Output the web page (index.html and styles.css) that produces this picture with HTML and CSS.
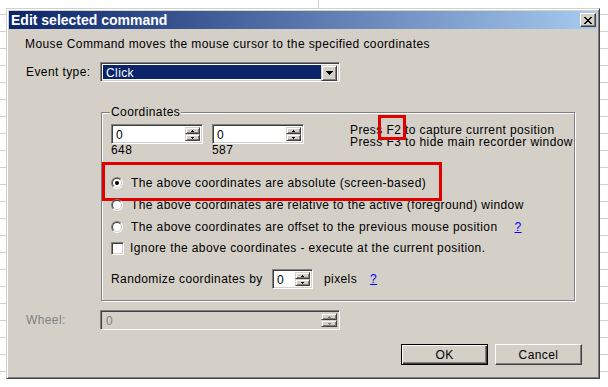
FILE: index.html
```html
<!DOCTYPE html>
<html>
<head>
<meta charset="utf-8">
<title>Edit selected command</title>
<link rel="stylesheet" href="styles.css">
</head>
<body>
<div class="dialog">
  <div class="titlebar">
    <span class="title">Edit selected command</span>
    <span class="close"><svg width="8" height="7" viewBox="0 0 8 7" shape-rendering="crispEdges"><path d="M0 0h2v1h-2z M6 0h2v1h-2z M1 1h2v1h-2z M5 1h2v1h-2z M2 2h4v1h-4z M3 3h2v1h-2z M2 4h4v1h-4z M1 5h2v1h-2z M5 5h2v1h-2z M0 6h2v1h-2z M6 6h2v1h-2z"/></svg></span>
  </div>
  <div class="content">
    <p class="desc">Mouse Command moves the mouse cursor to the specified coordinates</p>

    <div class="field-row event-row">
      <span class="field-label">Event type:</span>
      <div class="combo sunken">
        <span class="combo-value">Click</span>
        <span class="raised drop"><svg width="7" height="4" viewBox="0 0 7 4" shape-rendering="crispEdges"><path d="M0 0h7v1h-1v1h-1v1h-1v1h-1v-1h-1v-1h-1v-1h-1z"/></svg></span>
      </div>
    </div>

    <div class="group">
      <span class="legend">Coordinates</span>
      <div class="coords-row">
        <div class="coord">
          <div class="spin sunken">
            <span class="spin-value">0</span>
            <span class="spin-btns">
              <span class="raised spin-btn"><svg width="3" height="2" viewBox="0 0 3 2" shape-rendering="crispEdges"><path d="M1 0h1v1h1v1H0v-1h1z"/></svg></span>
              <span class="raised spin-btn"><svg width="3" height="2" viewBox="0 0 3 2" shape-rendering="crispEdges"><path d="M0 0h3v1h-1v1h-1v-1H0z"/></svg></span>
            </span>
          </div>
          <span class="coord-hint">648</span>
        </div>
        <div class="coord">
          <div class="spin sunken">
            <span class="spin-value">0</span>
            <span class="spin-btns">
              <span class="raised spin-btn"><svg width="3" height="2" viewBox="0 0 3 2" shape-rendering="crispEdges"><path d="M1 0h1v1h1v1H0v-1h1z"/></svg></span>
              <span class="raised spin-btn"><svg width="3" height="2" viewBox="0 0 3 2" shape-rendering="crispEdges"><path d="M0 0h3v1h-1v1h-1v-1H0z"/></svg></span>
            </span>
          </div>
          <span class="coord-hint">587</span>
        </div>
        <div class="press">
          <div>Press <span class="mark">F2</span> to capture current position</div>
          <div>Press F3 to hide main recorder window</div>
        </div>
      </div>

      <div class="options">
        <div class="option highlight"><span class="radio checked"></span><span class="opt-text">The above coordinates are absolute (screen-based)</span></div>
        <div class="option"><span class="radio"></span><span class="opt-text">The above coordinates are relative to the active (foreground) window</span></div>
        <div class="option"><span class="radio"></span><span class="opt-text">The above coordinates are offset to the previous mouse position</span><a class="help">?</a></div>
        <div class="option check-row"><span class="checkbox"></span><span class="chk-text">Ignore the above coordinates - execute at the current position.</span></div>
      </div>

      <div class="random-row">
        <span class="random-label">Randomize coordinates by</span>
        <div class="spin sunken small">
          <span class="spin-value">0</span>
          <span class="spin-btns">
            <span class="raised spin-btn"><svg width="3" height="2" viewBox="0 0 3 2" shape-rendering="crispEdges"><path d="M1 0h1v1h1v1H0v-1h1z"/></svg></span>
            <span class="raised spin-btn"><svg width="3" height="2" viewBox="0 0 3 2" shape-rendering="crispEdges"><path d="M0 0h3v1h-1v1h-1v-1H0z"/></svg></span>
          </span>
        </div>
        <span class="pixels">pixels</span>
        <a class="help">?</a>
      </div>
    </div>

    <div class="field-row wheel-row">
      <span class="field-label disabled">Wheel:</span>
      <div class="spin sunken wide disabled-box">
        <span class="spin-value">0</span>
        <span class="spin-btns">
          <span class="raised spin-btn"><svg width="3" height="2" viewBox="0 0 3 2" shape-rendering="crispEdges"><path d="M1 0h1v1h1v1H0v-1h1z"/></svg></span>
          <span class="raised spin-btn"><svg width="3" height="2" viewBox="0 0 3 2" shape-rendering="crispEdges"><path d="M0 0h3v1h-1v1h-1v-1H0z"/></svg></span>
        </span>
      </div>
    </div>

    <div class="buttons">
      <button class="btn default">OK</button>
      <button class="btn">Cancel</button>
    </div>
  </div>
</div>
</body>
</html>
```
FILE: styles.css
```css
* { box-sizing: border-box; }

html, body {
  margin: 0;
  padding: 0;
}

body {
  width: 608px;
  height: 387px;
  overflow: hidden;
  padding: 8px 0 0 6px;
  background-color: #fff;
  background-image:
    linear-gradient(to right, transparent 318px, #d0d0d0 318px, #d0d0d0 319px, transparent 319px),
    repeating-linear-gradient(to bottom, transparent 0, transparent 14px, #d0d0d0 14px, #d0d0d0 15px, transparent 15px, transparent 17px);
  background-size: 100% 8px, 100% 100%;
  background-repeat: no-repeat, repeat;
  font-family: "Liberation Sans", Arial, sans-serif;
  font-size: 12px;
  letter-spacing: 0.4px;
  color: #000;
}

.dialog {
  width: 594px;
  height: 371px;
  background: #d4d0c8;
  border: 1px solid;
  border-color: #d4d0c8 #404040 #404040 #d4d0c8;
  box-shadow: inset 1px 1px #fff, inset -1px -1px #808080;
  padding: 2px;
  display: flex;
  flex-direction: column;
}

.titlebar {
  height: 18px;
  flex: none;
  background: linear-gradient(to right, #0a246a, #a6caf0);
  display: flex;
  align-items: center;
  justify-content: space-between;
  padding: 0 1px 0 2px;
}

.title {
  color: #fff;
  font-weight: bold;
  font-size: 14px;
  line-height: 18px;
  letter-spacing: 0;
  white-space: nowrap;
}

.close {
  width: 16px;
  height: 14px;
  background: #d4d0c8;
  border: 1px solid;
  border-color: #fff #404040 #404040 #fff;
  box-shadow: inset -1px -1px #808080;
  display: flex;
  align-items: center;
  justify-content: center;
}

.close svg { display: block; }

.content {
  display: flex;
  flex-direction: column;
  align-items: flex-start;
}

.desc {
  margin: 8px 0 0 16px;
  line-height: 14px;
  white-space: nowrap;
}

.field-row {
  display: flex;
  align-items: center;
  height: 20px;
  margin-left: 17px;
}

.event-row { margin-top: 11px; }

.field-label {
  width: 74px;
  white-space: nowrap;
}

.field-label.disabled { color: #808080; }

.sunken {
  border: 1px solid;
  border-color: #808080 #fff #fff #808080;
  box-shadow: inset 1px 1px #404040, inset -1px -1px #d4d0c8;
  background: #fff;
}

.raised {
  background: #d4d0c8;
  border: 1px solid;
  border-color: #d4d0c8 #404040 #404040 #d4d0c8;
  box-shadow: inset 1px 1px #fff, inset -1px -1px #808080;
  display: flex;
  align-items: center;
  justify-content: center;
}

.raised svg { display: block; }

.combo {
  width: 240px;
  height: 20px;
  padding: 2px;
  display: flex;
}

.combo-value {
  flex: 1;
  background: #0a246a;
  color: #fff;
  line-height: 16px;
  padding-left: 3px;
}

.drop {
  width: 16px;
  height: 16px;
}

.group {
  position: relative;
  margin: 30px 0 0 92px;
  width: 474px;
  height: 189px;
  border: 1px solid #808080;
  box-shadow: inset 1px 1px #fff, 1px 1px #fff;
  padding: 11px 0 0 9px;
}

.legend {
  position: absolute;
  top: -8px;
  left: 8px;
  padding: 0 1px;
  line-height: 14px;
  background: #d4d0c8;
}

.coords-row {
  display: flex;
  align-items: flex-start;
}

.coord {
  display: flex;
  flex-direction: column;
  width: 92px;
}

.coord + .coord { margin-left: 9px; }

.spin {
  width: 92px;
  height: 20px;
  padding: 2px;
  display: flex;
  align-items: stretch;
}

.spin-value {
  flex: 1;
  line-height: 16px;
  padding-left: 2px;
}

.spin-btns {
  width: 15px;
  display: flex;
  flex-direction: column;
}

.spin-btn {
  flex: 1;
}

.coord-hint {
  line-height: 13px;
}

.press {
  margin-left: 46px;
  line-height: 12px;
  white-space: nowrap;
}

.mark { position: relative; }

.mark::after {
  content: "";
  position: absolute;
  left: -8px;
  right: -5px;
  top: -8px;
  bottom: -3px;
  border: 3px solid #e00000;
}

.options {
  margin-top: 15px;
}

.option {
  display: flex;
  align-items: center;
  height: 22px;
  white-space: nowrap;
}

.option.highlight { position: relative; }

.option.highlight::after {
  content: "";
  position: absolute;
  left: -9px;
  top: -10px;
  width: 334px;
  height: 33px;
  border: 3px solid #e00000;
}

.radio {
  position: relative;
  flex: none;
  width: 12px;
  height: 12px;
  border-radius: 50%;
  border: 1px solid;
  border-color: #808080 #fff #fff #808080;
}

.radio::before {
  content: "";
  position: absolute;
  inset: 0;
  border-radius: 50%;
  border: 1px solid;
  border-color: #404040 #d4d0c8 #d4d0c8 #404040;
  background: #fff;
}

.radio.checked::after {
  content: "";
  position: absolute;
  left: 3px;
  top: 3px;
  width: 4px;
  height: 4px;
  border-radius: 50%;
  background: #000;
}

.opt-text { margin-left: 8px; }

.check-row { height: 20px; }

.checkbox {
  flex: none;
  width: 13px;
  height: 13px;
  border: 1px solid;
  border-color: #808080 #fff #fff #808080;
  box-shadow: inset 1px 1px #404040, inset -1px -1px #d4d0c8;
  background: #fff;
}

.chk-text { margin-left: 6px; }

.help {
  color: #0000ff;
  text-decoration: underline;
  margin-left: 17px;
}

.random-row {
  display: flex;
  align-items: center;
  height: 20px;
  margin-top: 11px;
  white-space: nowrap;
}

.random-label { width: 161px; }

.spin.small { width: 41px; }

.pixels { margin-left: 11px; }

.random-row .help { margin-left: 13px; }

.wheel-row { margin-top: 9px; }

.spin.wide { width: 240px; }

.disabled-box { background: #d4d0c8; }

.disabled-box .spin-value { color: #808080; padding-left: 3px; }

.disabled-box .spin-btns { width: 16px; }

.disabled-box .spin-btn svg path { fill: #808080; }

.buttons {
  display: flex;
  gap: 7px;
  margin: 14px 0 0 392px;
}

.btn {
  width: 87px;
  height: 21px;
  padding: 0;
  background: #d4d0c8;
  font-family: inherit;
  font-size: 12px;
  letter-spacing: 0.4px;
  color: #000;
  border: 1px solid;
  border-color: #fff #404040 #404040 #fff;
  box-shadow: inset -1px -1px #808080;
}

.btn.default {
  border-color: #000;
  box-shadow: inset 1px 1px #fff, inset -1px -1px #404040, inset -2px -2px #808080;
}
```
